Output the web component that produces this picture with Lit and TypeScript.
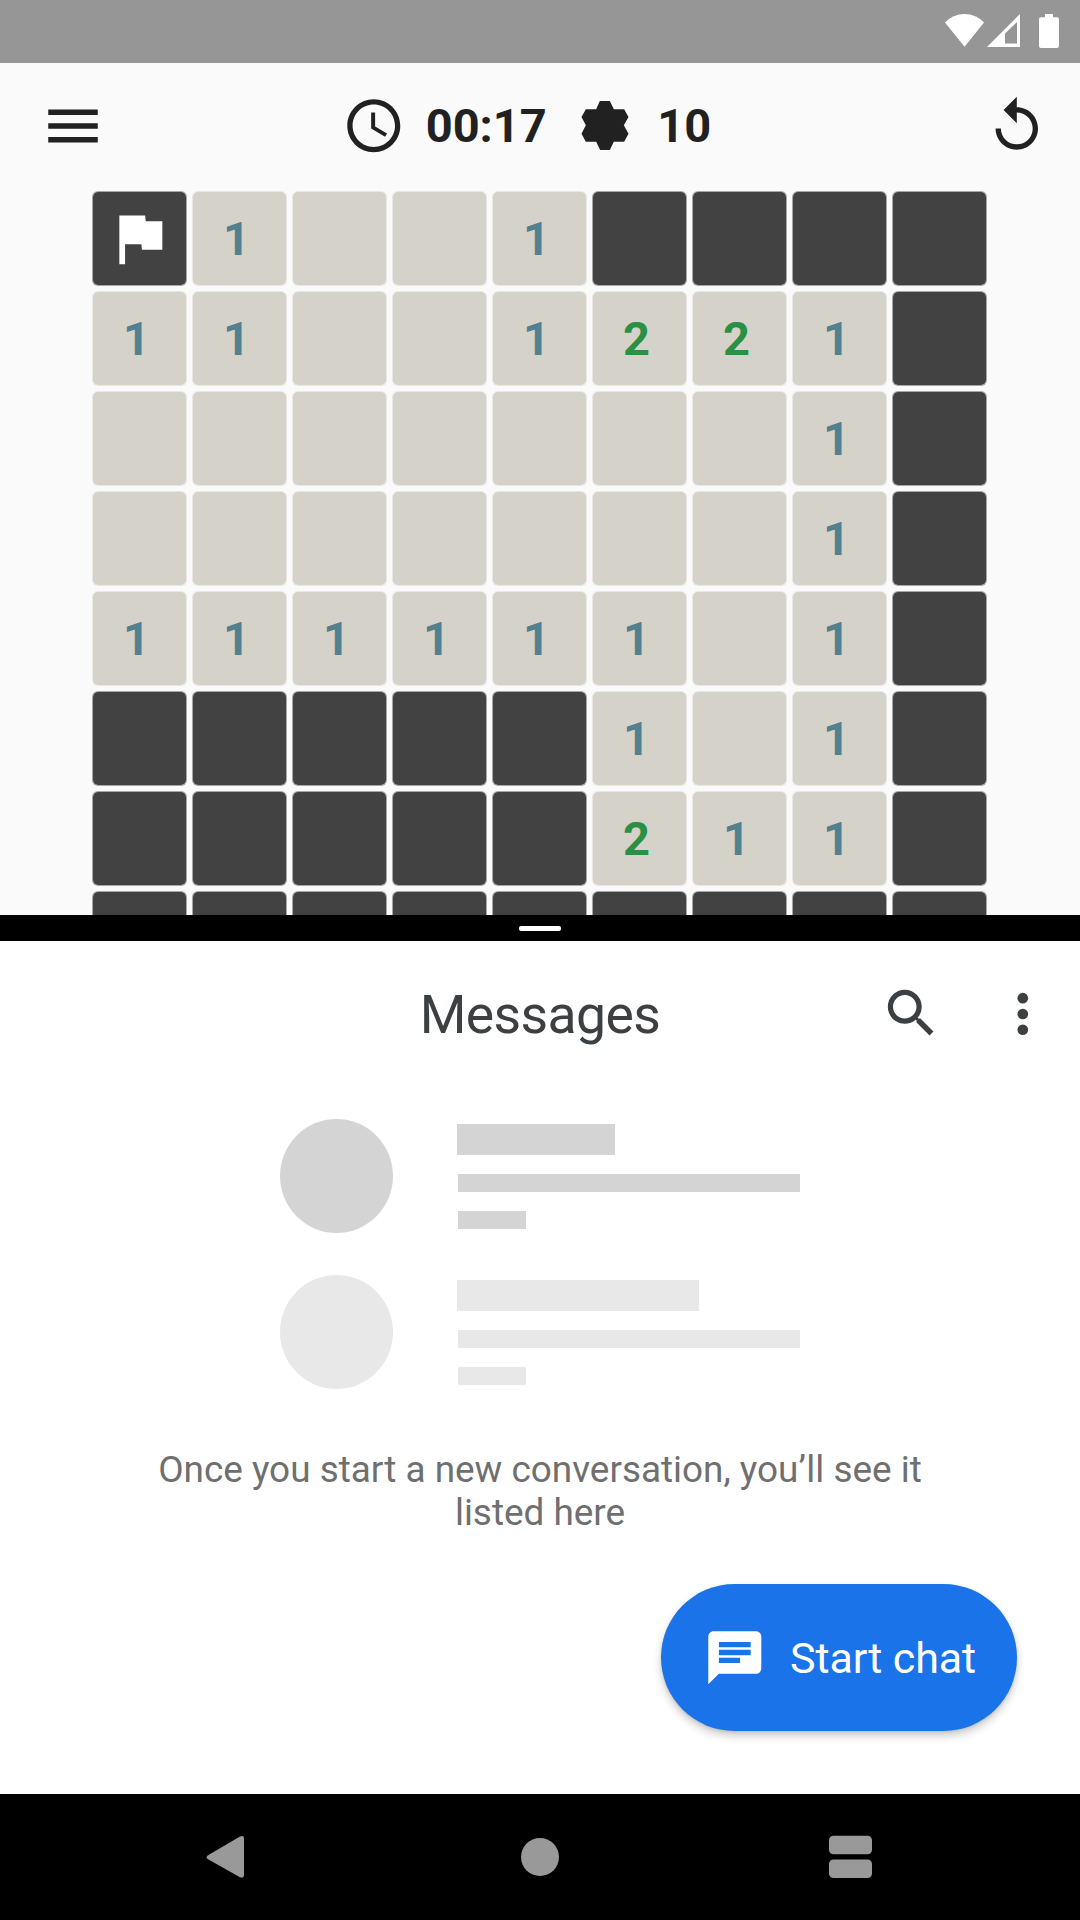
import { LitElement, html, css, svg } from "lit";
import { customElement } from "lit/decorators.js";

/* One string per row: F flag, # covered, . empty, digits are neighbour counts. */
const ROWS = [
  "F1..1####",
  "11..1221#",
  ".......1#",
  ".......1#",
  "111111.1#",
  "#####1.1#",
  "#####211#",
  "#########",
];

const flag = html`<svg class="flag" viewBox="0 0 24 24">
  <path d="M14.2 6L14 4H5v17h2v-7h5.7l.2 2h7.1V6z" />
</svg>`;

@customElement("mine-board")
export class MineBoard extends LitElement {
  static styles = css`
    :host {
      display: block;
      flex: 1;
      min-height: 0;
      overflow: hidden;
    }
    .grid {
      display: grid;
      grid-template-columns: repeat(9, 95px);
      grid-auto-rows: 95px;
      gap: 5px;
      padding-left: 92px;
    }
    .cell {
      display: flex;
      align-items: center;
      justify-content: center;
      border: 1px solid rgba(213, 210, 202, 0.45);
      border-radius: 6px;
      background: #d5d2ca;
      background-clip: padding-box;
      box-sizing: border-box;
      padding: 1px 6px 0 0;
      font: 700 47px/56px Roboto, sans-serif;
    }
    .covered {
      border-color: rgba(66, 66, 66, 0.45);
      background-color: #424242;
      padding: 0;
    }
    .n1 {
      color: #518090;
    }
    .n2 {
      color: #2a9044;
    }
    .flag {
      flex: none;
      width: 68.8px;
      height: 68.8px;
      fill: #fff;
    }
  `;

  render() {
    return html`<div class="grid">
      ${ROWS.flatMap((row) =>
        [...row].map((c) => {
          if (c === "F") return html`<div class="cell covered">${flag}</div>`;
          if (c === "#") return html`<div class="cell covered"></div>`;
          if (c === ".") return html`<div class="cell"></div>`;
          return html`<div class="cell n${c}">${c}</div>`;
        })
      )}
    </div>`;
  }
}

@customElement("app-root")
export class AppRoot extends LitElement {
  static styles = css`
    :host {
      display: flex;
      flex-direction: column;
      width: 1080px;
      height: 1920px;
      overflow: hidden;
      background: #fff;
      font-family: Roboto, sans-serif;
    }
    svg {
      display: block;
      flex: none;
    }
    .status {
      height: 63px;
      background: #969696;
      display: flex;
      justify-content: flex-end;
    }
    .game {
      height: 852px;
      background: #fafafa;
      display: flex;
      flex-direction: column;
    }
    .toolbar {
      height: 128px;
      flex: none;
      box-sizing: border-box;
      padding: 0 31.7px 3px 40px;
      display: flex;
      align-items: center;
      color: #212121;
      fill: #212121;
    }
    .stats {
      display: flex;
      align-items: center;
      margin: 0 auto 0 235.7px;
      font-weight: 700;
      font-size: 47px;
      line-height: 56px;
    }
    .clock {
      margin-right: 20.4px;
    }
    .time {
      width: 155px;
    }
    .count {
      margin-left: 28.5px;
    }
    .restart {
      margin-top: 1px;
    }
    .divider {
      height: 26px;
      background: #000;
      display: flex;
      justify-content: center;
      align-items: center;
    }
    .handle {
      width: 42px;
      height: 5px;
      border-radius: 2px;
      background: #fff;
      margin-top: 1px;
    }
    .messages {
      height: 853px;
      display: flex;
      flex-direction: column;
    }
    .appbar {
      height: 144px;
      display: grid;
      grid-template-columns: 1fr auto 1fr;
      align-items: center;
      color: #3c4043;
      fill: #3c4043;
    }
    .title {
      grid-column: 2;
      margin: 0;
      padding-top: 4px;
      font-size: 53.5px;
      line-height: 64px;
      font-weight: 400;
      letter-spacing: -0.6px;
    }
    .actions {
      display: flex;
      justify-content: flex-end;
      align-items: center;
      gap: 48.1px;
      padding-right: 25.7px;
    }
    .skeletons {
      display: flex;
      flex-direction: column;
      gap: 42px;
      padding: 34px 0 0 280px;
    }
    .item {
      display: flex;
      gap: 64px;
      height: 114px;
      color: #d4d4d4;
    }
    .item.light {
      color: #e8e8e8;
    }
    .avatar {
      width: 113px;
      height: 114px;
      border-radius: 50%;
      background: currentColor;
    }
    .lines {
      padding-top: 5px;
      display: flex;
      flex-direction: column;
      gap: 19px;
    }
    .bar {
      height: 18px;
      background: currentColor;
      margin-left: 1px;
    }
    .head {
      height: 31px;
      width: 158px;
      margin-left: 0;
    }
    .light .head {
      width: 242px;
    }
    .long {
      width: 342px;
    }
    .short {
      width: 68px;
    }
    .hint {
      margin: 59px 0 0;
      text-align: center;
      font-size: 36.9px;
      line-height: 43px;
      color: #6f6f6f;
    }
    .fab {
      margin: 49.5px 63px 0 auto;
      width: 356px;
      height: 147px;
      border: 0;
      border-radius: 73.5px;
      background: #1a73e8;
      color: #fff;
      fill: #fff;
      box-shadow: 0 5px 8px rgba(0, 0, 0, 0.2), 0 1px 3px rgba(0, 0, 0, 0.1);
      display: flex;
      align-items: center;
      box-sizing: border-box;
      padding: 1px 0 0 41.5px;
      font: 400 43px/52px Roboto, sans-serif;
      letter-spacing: -0.1px;
    }
    .label {
      margin-left: 24px;
      white-space: nowrap;
    }
    .nav {
      height: 126px;
      box-sizing: border-box;
      background: #000;
      fill: #999;
      display: flex;
      align-items: center;
      padding-left: 206px;
    }
    .home {
      margin: 0 270.4px 0 277px;
    }
  `;

  render() {
    return html`
      <div class="status">
        <svg width="140" height="63" viewBox="940 0 140 63" fill="#fff">
          <path d="M945 22.5 Q953 14 964.5 14 T984 22.5 L964.5 46.7Z" />
          <path
            fill-rule="evenodd"
            d="M987 47L1020 14V47Z M1005 33.5V43.6H1017V22Z"
          />
          <path
            d="M1045 14h8v3.3h4q2 0 2 2V46q0 2-2 2h-16q-2 0-2-2V19.3q0-2 2-2h4z"
          />
        </svg>
      </div>
      <section class="game">
        <div class="toolbar">
          <svg width="66" height="66" viewBox="0 0 24 24">
            <path d="M3 18h18v-2H3v2zm0-5h18v-2H3v2zm0-7v2h18V6H3z" />
          </svg>
          <div class="stats">
            <svg class="clock" width="63.6" height="63.6" viewBox="0 0 24 24">
              <path
                d="M11.99 2C6.47 2 2 6.48 2 12s4.47 10 9.99 10C17.52 22 22 17.52 22 12S17.52 2 11.99 2zM12 20c-4.42 0-8-3.58-8-8s3.58-8 8-8 8 3.58 8 8-3.58 8-8 8zm.5-13H11v6l5.25 3.15.75-1.23-4.5-2.67z"
              />
            </svg>
            <span class="time">00:17</span>
            <svg width="48" height="49" viewBox="752 123 143 147">
              <path
                d="M808 123H838L850 148H881L894 171 880 196 894 221 881 245H850L838 270H809L797 245H766L753 221 766 196 753 171 766 148H797Z"
              />
            </svg>
            <span class="count">10</span>
          </div>
          <svg class="restart" width="63.6" height="63.6" viewBox="0 0 24 24">
            <path
              d="M12 5V1L7 6l5 5V7c3.31 0 6 2.69 6 6s-2.69 6-6 6-6-2.69-6-6H4c0 4.42 3.58 8 8 8s8-3.58 8-8-3.58-8-8-8z"
            />
          </svg>
        </div>
        <mine-board></mine-board>
      </section>
      <div class="divider"><div class="handle"></div></div>
      <section class="messages">
        <header class="appbar">
          <h1 class="title">Messages</h1>
          <div class="actions">
            <svg width="62.6" height="62.6" viewBox="0 0 24 24">
              <path
                d="M15.5 14h-.79l-.28-.27C15.41 12.59 16 11.11 16 9.5 16 5.91 13.09 3 9.5 3S3 5.91 3 9.5 5.91 16 9.5 16c1.61 0 3.09-.59 4.23-1.57l.27.28v.79l5 4.99L20.49 19l-4.99-5zm-6 0C7.01 14 5 11.99 5 9.5S7.01 5 9.5 5 14 7.01 14 9.5 11.99 14 9.5 14z"
              />
            </svg>
            <svg width="63.6" height="63.6" viewBox="0 0 24 24">
              ${[6.5, 12.45, 18.4].map((y) => svg`<circle cx="12" cy=${y} r="2.02" />`)}
            </svg>
          </div>
        </header>
        <div class="skeletons">
          ${["", "light"].map(
            (tone) => html`<div class="item ${tone}">
              <div class="avatar"></div>
              <div class="lines">
                <div class="bar head"></div>
                <div class="bar long"></div>
                <div class="bar short"></div>
              </div>
            </div>`
          )}
        </div>
        <p class="hint">
          Once you start a new conversation, you’ll see it<br />listed here
        </p>
        <button class="fab">
          <svg width="63.6" height="63.6" viewBox="0 0 24 24">
            <path
              d="M20 2H4c-1.1 0-1.99.9-1.99 2L2 22l4-4h14c1.1 0 2-.9 2-2V4c0-1.1-.9-2-2-2zM6 9h12v2H6V9zm8 5H6v-2h8v2zm4-6H6V6h12v2z"
            />
          </svg>
          <span class="label">Start chat</span>
        </button>
      </section>
      <nav class="nav">
        <svg width="38" height="44" viewBox="0 0 38 44">
          <path d="M1.6 20.4L34 1.6Q38-.2 38 3.4V40Q38 43.8 34 42.2L1.6 24Q-.2 22.2 1.6 20.4Z" />
        </svg>
        <svg class="home" width="38" height="38" viewBox="0 0 38 38">
          <circle cx="19" cy="19" r="19" />
        </svg>
        <svg width="43" height="44" viewBox="0 0 43 44">
          <rect y=".7" width="43" height="18.6" rx="4.5" />
          <rect y="24.5" width="43" height="18.6" rx="4.5" />
        </svg>
      </nav>
    `;
  }
}
